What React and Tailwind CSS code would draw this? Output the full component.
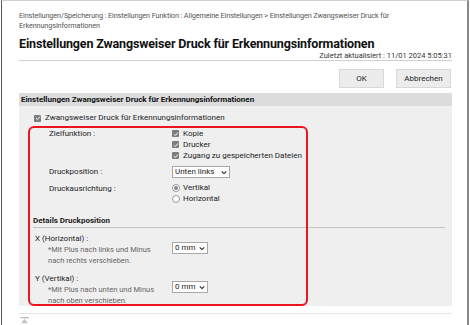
import React from 'react';

function Box({ checked = true }) {
  return (
    <span className="inline-flex w-[7px] h-[7px] rounded-[1px] bg-[#7d7d7d] items-center justify-center shrink-0">
      {checked && (
        <svg viewBox="0 0 8 8" className="w-[6px] h-[6px]">
          <path d="M1.3 4.2 L3.2 6 L6.7 2" fill="none" stroke="#fff" strokeWidth="1.3" />
        </svg>
      )}
    </span>
  );
}

function Radio({ on }) {
  return (
    <span className="inline-flex w-[8px] h-[8px] rounded-full border border-[#9a9a9a] bg-white items-center justify-center shrink-0">
      {on && <span className="w-[4px] h-[4px] rounded-full bg-[#8a8a8a]" />}
    </span>
  );
}

function Select({ value, w }) {
  return (
    <div className={`flex items-center justify-between bg-white border border-[#a8a8a8] h-[12px] px-[2px] text-[8px] text-[#222] ${w}`}>
      <span>{value}</span>
      <svg viewBox="0 0 8 6" className="w-[6px] h-[5px]">
        <path d="M1 1.5 L4 4.5 L7 1.5" fill="none" stroke="#222" strokeWidth="1.4" />
      </svg>
    </div>
  );
}

export default function App() {
  return (
    <div className="w-[470px] h-[325px] bg-white overflow-hidden font-['Roboto',sans-serif]">
      <div className="relative ml-[1px] w-[468px] h-[325px] border-t border-t-[#d0d0d0] border-l border-l-[#555] border-r-2 border-r-[#8a8a8a] pl-[17px] pr-[15px]">
        {/* breadcrumb */}
        <div className="pt-[10px] text-[7.3px] leading-[10px] tracking-[-0.12px] text-[#555]">
          Einstellungen/Speicherung : Einstellungen Funktion : Allgemeine Einstellungen &gt; Einstellungen Zwangsweiser Druck für Erkennungsinformationen
        </div>
        <h1 className="mt-[5px] text-[12.5px] leading-[16px] tracking-[-0.15px] font-bold text-[#111]">
          Einstellungen Zwangsweiser Druck für Erkennungsinformationen
        </h1>
        <div className="text-right text-[7.5px] leading-[8px] text-[#333]">
          Zuletzt aktualisiert : 11/01 2024 5:05:31
        </div>
        <div className="h-px bg-[#cfcfcf]" />
        <div className="mt-[8px] flex justify-end gap-[12px] pr-[1px]">
          <button className="w-[45px] h-[19px] bg-[#ececec] border border-[#d8d8d8] text-[8px] text-[#222]">OK</button>
          <button className="w-[55px] h-[19px] bg-[#ececec] border border-[#d8d8d8] text-[8px] text-[#222]">Abbrechen</button>
        </div>

        {/* settings panel */}
        <div className="mt-[5px] bg-[#efefef] relative">
          <div className="h-[13px] bg-[#dcdcdc] pl-[2px] flex items-center text-[8px] font-bold text-[#111]">
            Einstellungen Zwangsweiser Druck für Erkennungsinformationen
          </div>
          <div className="text-[8px] text-[#222]">
            <div className="pl-[15px] pt-[7px] flex items-center gap-[4px] h-[10px] box-content">
              <Box />
              <span>Zwangsweiser Druck für Erkennungsinformationen</span>
            </div>

            <div className="pl-[30px] mt-[5px] flex">
              <div className="w-[123px] leading-[11px]">Zielfunktion :</div>
              <div className="flex flex-col">
                {['Kopie', 'Drucker', 'Zugang zu gespeicherten Dateien'].map((t) => (
                  <div key={t} className="flex items-center gap-[4px] h-[11px]">
                    <Box />
                    <span>{t}</span>
                  </div>
                ))}
              </div>
            </div>

            <div className="pl-[30px] mt-[5px] flex items-center">
              <div className="w-[123px]">Druckposition :</div>
              <Select value="Unten links" w="w-[58px]" />
            </div>

            <div className="pl-[30px] mt-[4px] flex">
              <div className="w-[123px] leading-[11px] pt-[1px]">Druckausrichtung :</div>
              <div className="flex flex-col">
                <div className="flex items-center gap-[3px] h-[11px]">
                  <Radio on />
                  <span>Vertikal</span>
                </div>
                <div className="flex items-center gap-[3px] h-[11px]">
                  <Radio />
                  <span>Horizontal</span>
                </div>
              </div>
            </div>

            <div className="ml-[14px] mr-[7px] mt-[11px] border-b border-[#c4c4c4] pb-[1px] font-bold leading-[11px]">
              Details Druckposition
            </div>

            <div className="pl-[16px] mt-[5px] flex">
              <div className="w-[137px]">
                <div className="leading-[11px]">X (Horizontal) :</div>
                <div className="pl-[13px] text-[7.5px] leading-[11px] text-[#666]">
                  *Mit Plus nach links und Minus<br />nach rechts verschieben.
                </div>
              </div>
              <div className="pt-[9px]">
                <Select value="0 mm" w="w-[36px]" />
              </div>
            </div>

            <div className="pl-[16px] mt-[7px] flex">
              <div className="w-[137px]">
                <div className="leading-[11px]">Y (Vertikal) :</div>
                <div className="pl-[13px] text-[7.5px] leading-[11px] text-[#666]">
                  *Mit Plus nach unten und Minus<br />nach oben verschieben.
                </div>
              </div>
              <div className="pt-[8px]">
                <Select value="0 mm" w="w-[36px]" />
              </div>
            </div>
          </div>

          {/* red annotation frame */}
          <div className="absolute left-[9px] top-[33px] w-[280px] bottom-0 border-2 border-[#ec141e] rounded-[6px]" />
        </div>

        <div className="mt-[7px] h-px bg-[#e6e6e6]" />
        <div className="mt-[3px] ml-[1px]">
          <svg viewBox="0 0 10 8" className="w-[9px] h-[7px]">
            <rect x="0" y="0" width="10" height="1.4" fill="#b8b8b8" />
            <path d="M5 2 L9 7 L1 7 Z" fill="#c4c4c4" />
          </svg>
        </div>
      </div>
    </div>
  );
}
